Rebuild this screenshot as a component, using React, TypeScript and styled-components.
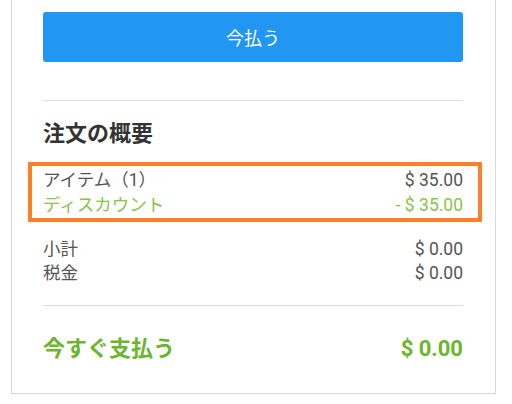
import React from "react";
import styled, { createGlobalStyle } from "styled-components";

const Global = createGlobalStyle`
  html, body { margin: 0; padding: 0; background: #fff; }
  body { font-family: Roboto, "Noto Sans CJK JP", sans-serif; }
`;

const Card = styled.div`
  box-sizing: border-box;
  width: 485px;
  margin-left: 11px;
  border: 1px solid #d6d6d6;
  border-top: none;
  padding: 12px 32px 30px 31px;
  display: flex;
  flex-direction: column;
`;

const PayButton = styled.button`
  height: 50px;
  border: none;
  border-radius: 3px;
  background: #2196f3;
  color: #fff;
  font-family: Roboto, "Noto Sans CJK JP", sans-serif;
  font-size: 18px;
  cursor: pointer;
`;

const Divider = styled.hr<{ $top: number }>`
  margin: ${(p) => p.$top}px 0 0;
  border: none;
  border-top: 1px solid #dcdcdc;
  height: 0;
`;

const Heading = styled.h2`
  margin: 20px 0 0;
  font-size: 22px;
  line-height: 26px;
  font-weight: 700;
  color: #333;
`;

const Highlight = styled.div`
  margin: 15px -19px 0 -15px;
  border: 4px solid #ff7f27;
  padding: 2px 15px 1px 11px;
  display: flex;
  flex-direction: column;
  gap: 1px;
`;

const Group = styled.div`
  margin-top: 15px;
  display: flex;
  flex-direction: column;
`;

const Row = styled.div<{ $green?: boolean }>`
  display: flex;
  justify-content: space-between;
  font-size: 17.5px;
  line-height: 24px;
  color: ${(p) => (p.$green ? "#8bc34a" : "#555")};
`;

const Total = styled.div`
  margin-top: 29px;
  display: flex;
  justify-content: space-between;
  font-size: 22px;
  line-height: 28px;
  font-weight: 700;
  color: #6cb52e;
`;

export default function App() {
  return (
    <>
      <Global />
      <Card>
        <PayButton>今払う</PayButton>
        <Divider $top={38} />
        <Heading>注文の概要</Heading>
        <Highlight>
          <Row>
            <span>アイテム（1）</span>
            <span>$ 35.00</span>
          </Row>
          <Row $green>
            <span>ディスカウント</span>
            <span>- $ 35.00</span>
          </Row>
        </Highlight>
        <Group>
          <Row>
            <span>小計</span>
            <span>$ 0.00</span>
          </Row>
          <Row>
            <span>税金</span>
            <span>$ 0.00</span>
          </Row>
        </Group>
        <Divider $top={20} />
        <Total>
          <span>今すぐ支払う</span>
          <span>$ 0.00</span>
        </Total>
      </Card>
    </>
  );
}
